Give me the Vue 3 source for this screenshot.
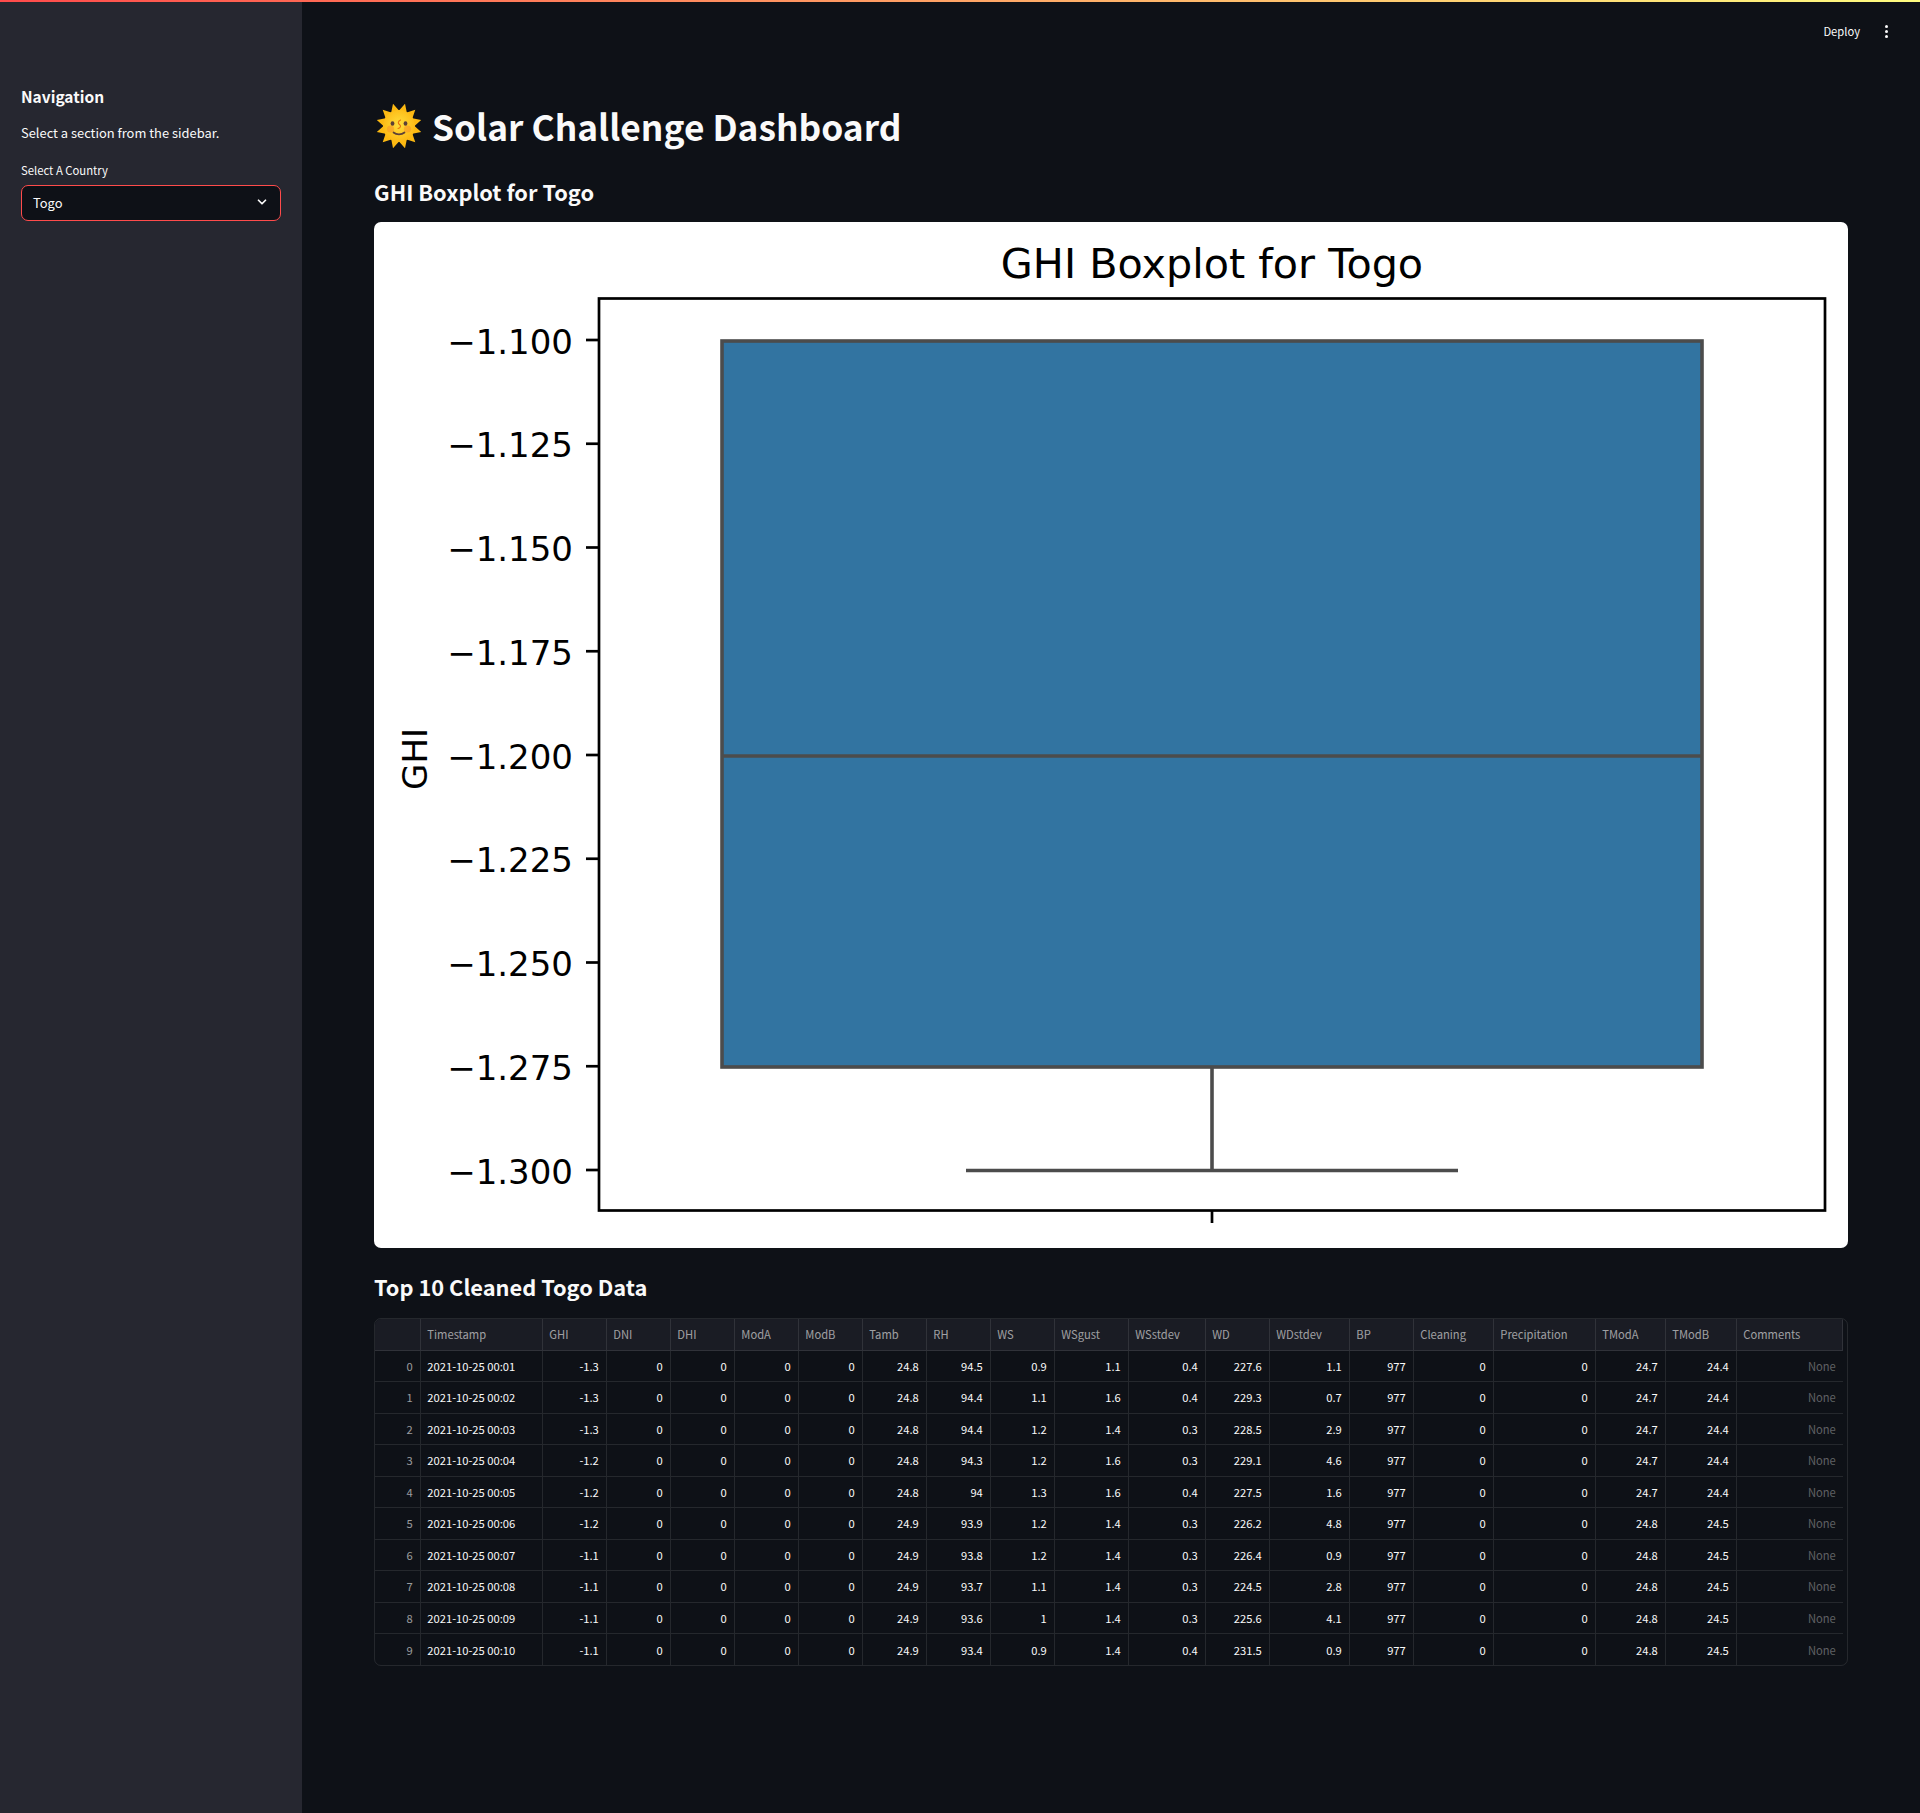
<script setup>
const ticks = ['−1.100', '−1.125', '−1.150', '−1.175', '−1.200', '−1.225', '−1.250', '−1.275', '−1.300']
const tickY = ticks.map((_, i) => 340 - 222 + i * 103.75)

const columns = [
  { name: '', width: 45.8 },
  { name: 'Timestamp', width: 122 },
  { name: 'GHI', width: 64 },
  { name: 'DNI', width: 64 },
  { name: 'DHI', width: 64 },
  { name: 'ModA', width: 64 },
  { name: 'ModB', width: 64 },
  { name: 'Tamb', width: 64 },
  { name: 'RH', width: 64 },
  { name: 'WS', width: 64 },
  { name: 'WSgust', width: 74 },
  { name: 'WSstdev', width: 77 },
  { name: 'WD', width: 64 },
  { name: 'WDstdev', width: 80 },
  { name: 'BP', width: 64 },
  { name: 'Cleaning', width: 80 },
  { name: 'Precipitation', width: 102 },
  { name: 'TModA', width: 70 },
  { name: 'TModB', width: 71 },
  { name: 'Comments', width: 106 },
]

const gridColumns = columns.map((c) => c.width + 'px').join(' ')

const rows = [
  ['00:01', -1.3, 24.8, 94.5, 0.9, 1.1, 0.4, 227.6, 1.1, 24.7, 24.4],
  ['00:02', -1.3, 24.8, 94.4, 1.1, 1.6, 0.4, 229.3, 0.7, 24.7, 24.4],
  ['00:03', -1.3, 24.8, 94.4, 1.2, 1.4, 0.3, 228.5, 2.9, 24.7, 24.4],
  ['00:04', -1.2, 24.8, 94.3, 1.2, 1.6, 0.3, 229.1, 4.6, 24.7, 24.4],
  ['00:05', -1.2, 24.8, 94, 1.3, 1.6, 0.4, 227.5, 1.6, 24.7, 24.4],
  ['00:06', -1.2, 24.9, 93.9, 1.2, 1.4, 0.3, 226.2, 4.8, 24.8, 24.5],
  ['00:07', -1.1, 24.9, 93.8, 1.2, 1.4, 0.3, 226.4, 0.9, 24.8, 24.5],
  ['00:08', -1.1, 24.9, 93.7, 1.1, 1.4, 0.3, 224.5, 2.8, 24.8, 24.5],
  ['00:09', -1.1, 24.9, 93.6, 1, 1.4, 0.3, 225.6, 4.1, 24.8, 24.5],
  ['00:10', -1.1, 24.9, 93.4, 0.9, 1.4, 0.4, 231.5, 0.9, 24.8, 24.5],
].map((r) => [
  '2021-10-25 ' + r[0], r[1], 0, 0, 0, 0, r[2], r[3], r[4], r[5], r[6], r[7], r[8], 977, 0, 0, r[9], r[10],
])

// sun rays for the title emoji
const rays = []
for (let i = 0; i < 24; i++) {
  const a = (i / 24) * Math.PI * 2 - Math.PI / 2 + Math.PI / 12
  const r = i % 2 === 0 ? 23 : 15.5
  rays.push((23 + Math.cos(a) * r).toFixed(1) + ',' + (23 + Math.sin(a) * r).toFixed(1))
}
const sunPoints = rays.join(' ')
</script>

<template>
  <div class="page">
    <div class="topbar"></div>
    <div class="layout">
      <aside class="sidebar">
        <h4>Navigation</h4>
        <p>Select a section from the sidebar.</p>
        <label>Select A Country</label>
        <div class="select">
          <span>Togo</span>
          <svg width="14" height="14" viewBox="0 0 24 24" fill="none" stroke="#fafafa" stroke-width="3" stroke-linecap="round" stroke-linejoin="round">
            <path d="M6 9l6 6 6-6" />
          </svg>
        </div>
      </aside>

      <main class="main">
        <div class="toolbar">
          <span class="deploy">Deploy</span>
          <span class="dots"><i></i><i></i><i></i></span>
        </div>

        <h1>
          <svg class="sun" width="46" height="46" viewBox="0 0 46 46">
            <defs>
              <radialGradient id="face" cx="50%" cy="45%" r="55%">
                <stop offset="0" stop-color="#ffdd3c" />
                <stop offset="1" stop-color="#fdb813" />
              </radialGradient>
            </defs>
            <polygon :points="sunPoints" fill="#fcb912" />
            <circle cx="23" cy="23" r="16" fill="url(#face)" />
            <circle cx="14.5" cy="26" r="3.6" fill="#f79329" opacity="0.55" />
            <circle cx="31.5" cy="26" r="3.6" fill="#f79329" opacity="0.55" />
            <ellipse cx="16.5" cy="20.5" rx="1.9" ry="2.2" fill="#5d4037" />
            <ellipse cx="29.5" cy="20.5" rx="1.9" ry="2.2" fill="#5d4037" />
            <path d="M24.5 17c-3 1.5-2.500 3.500-1 4.500s1.500 3.500-1.500 4" fill="none" stroke="#e8710a" stroke-width="1.100" stroke-linecap="round" />
            <path d="M17.500 29.500c3 2.600 8 2.600 11 0" fill="none" stroke="#5d4037" stroke-width="1.700" stroke-linecap="round" />
          </svg>
          Solar Challenge Dashboard
        </h1>

        <h3 class="first">GHI Boxplot for Togo</h3>

        <div class="chart">
          <svg width="1474" height="1026" viewBox="0 0 1474 1026">
            <rect x="348" y="119" width="980" height="726" fill="#3274a1" />
            <rect x="348" y="119" width="980" height="726" fill="none" stroke="#4c4c4c" stroke-width="3.6" />
            <line x1="348" y1="534" x2="1328" y2="534" stroke="#4c4c4c" stroke-width="3.6" />
            <line x1="838" y1="845" x2="838" y2="948.5" stroke="#4c4c4c" stroke-width="3.6" />
            <line x1="592" y1="948.500" x2="1084" y2="948.500" stroke="#4c4c4c" stroke-width="3.6" />
            <rect x="225" y="76.500" width="1226" height="912" fill="none" stroke="#000" stroke-width="2.700" />
            <g v-for="(t, i) in ticks" :key="t">
              <line x1="212" :y1="tickY[i]" x2="225" :y2="tickY[i]" stroke="#000" stroke-width="2.700" />
              <text x="199" :y="tickY[i] + 13.5" text-anchor="end" class="tick">{{ t }}</text>
            </g>
            <line x1="838" y1="988" x2="838" y2="1001" stroke="#000" stroke-width="2.700" />
            <text x="838" y="56" text-anchor="middle" class="plot-title">GHI Boxplot for Togo</text>
            <text transform="translate(53 537) rotate(-90)" text-anchor="middle" class="tick">GHI</text>
          </svg>
        </div>

        <h3 class="second">Top 10 Cleaned Togo Data</h3>

        <div class="table">
          <div class="row head" :style="{ gridTemplateColumns: gridColumns }">
            <div v-for="c in columns" :key="c.name" class="cell">{{ c.name }}</div>
          </div>
          <div v-for="(r, i) in rows" :key="i" class="row" :style="{ gridTemplateColumns: gridColumns }">
            <div class="cell num dim">{{ i }}</div>
            <div class="cell">{{ r[0] }}</div>
            <div v-for="(v, j) in r.slice(1)" :key="j" class="cell num">{{ v }}</div>
            <div class="cell num none">None</div>
          </div>
        </div>
      </main>
    </div>
  </div>
</template>

<style>
body {
  background: #0e1117;
}
</style>

<style scoped>
.page {
  width: 1920px;
  height: 1813px;
  display: flex;
  flex-direction: column;
  background: #0e1117;
  color: #fafafa;
  font-family: "Noto Sans CJK SC", "Noto Sans", sans-serif;
  font-size: 13px;
  overflow: hidden;
}

.topbar {
  height: 2px;
  flex: none;
  background: linear-gradient(90deg, rgb(255, 75, 75), rgb(255, 253, 128));
}

.layout {
  flex: 1;
  display: flex;
}

.sidebar {
  width: 302px;
  flex: none;
  box-sizing: border-box;
  background: #262730;
  padding: 83px 21px 0;
}

.sidebar h4 {
  margin: 0;
  font-size: 15.5px;
  line-height: 22px;
  font-weight: 600;
}

.sidebar p {
  margin: 15px 0 0;
  font-size: 12.9px;
  line-height: 22px;
}

.sidebar label {
  display: block;
  margin-top: 17px;
  font-size: 11.3px;
  line-height: 18px;
}

.select {
  margin-top: 6px;
  height: 36px;
  box-sizing: border-box;
  padding: 0 11px 2px 11px;
  display: flex;
  align-items: center;
  justify-content: space-between;
  background: #0e1117;
  border: 1px solid #ff4b4b;
  border-radius: 7px;
  font-size: 12.9px;
}

.main {
  flex: 1;
  padding: 0 72px;
}

.toolbar {
  height: 58px;
  margin-right: -72px;
  display: flex;
  justify-content: flex-end;
  align-items: center;
  padding-right: 32px;
  gap: 25px;
}

.deploy {
  font-size: 11.2px;
}

.dots {
  display: flex;
  flex-direction: column;
  gap: 2px;
}

.dots i {
  width: 3px;
  height: 3px;
  border-radius: 50%;
  background: #fafafa;
}

h1 {
  margin: 42px 0 0;
  height: 48px;
  display: flex;
  align-items: center;
  gap: 10px;
  font-size: 35.3px;
  line-height: 48px;
  font-weight: 700;
}

.sun {
  flex: none;
  margin-left: 2px;
  margin-top: -1px;
}

h3 {
  margin: 0;
  font-size: 21.8px;
  line-height: 34px;
  font-weight: 600;
}

h3.first {
  margin-top: 25px;
}

h3.second {
  margin-top: 22px;
}

.chart {
  margin-top: 13px;
  width: 1474px;
  height: 1026px;
  background: #fff;
  border-radius: 7px;
  overflow: hidden;
}

.chart svg {
  display: block;
}

.tick {
  font-family: "DejaVu Sans", sans-serif;
  font-size: 34px;
  fill: #000;
}

.plot-title {
  font-family: "DejaVu Sans", sans-serif;
  font-size: 41.3px;
  fill: #000;
}

.table {
  margin-top: 14px;
  width: 1474px;
  height: 348px;
  box-sizing: border-box;
  border: 1px solid rgba(250, 250, 250, 0.1);
  border-radius: 7px;
  overflow: hidden;
  font-size: 11.2px;
}

.row {
  display: grid;
  height: 31.5px;
}

.cell {
  box-sizing: border-box;
  padding: 0 7px 0 6.5px;
  display: flex;
  align-items: center;
  white-space: nowrap;
  border-right: 1px solid rgba(250, 250, 250, 0.1);
  border-bottom: 1px solid rgba(250, 250, 250, 0.1);
}

.row:last-child .cell {
  border-bottom: 0;
}

.head .cell {
  background: #1a1c24;
  color: rgba(250, 250, 250, 0.6);
}

.num {
  justify-content: flex-end;
}

.dim {
  color: rgba(250, 250, 250, 0.6);
}

.none {
  color: rgba(250, 250, 250, 0.35);
  border-right: 0;
}
</style>
